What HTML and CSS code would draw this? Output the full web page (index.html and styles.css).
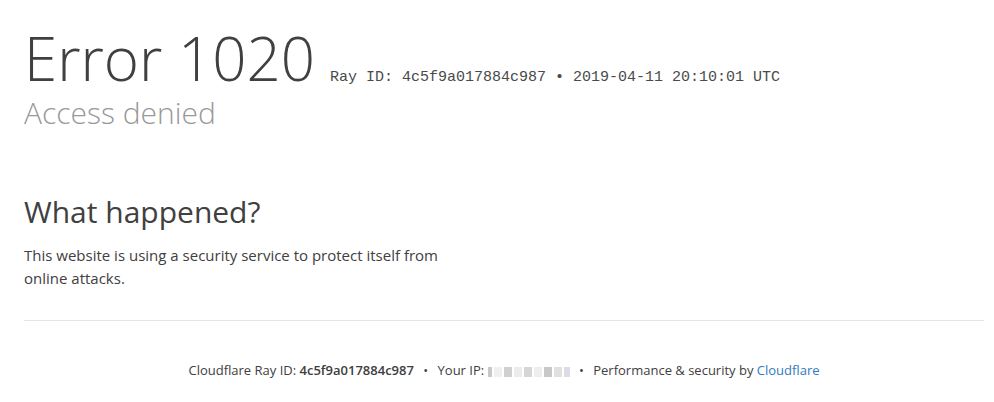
FILE: index.html
```html
<!DOCTYPE html>
<html>
<head>
<meta charset="utf-8">
<link rel="stylesheet" href="styles.css">
</head>
<body>
<div class="wrapper">
  <header class="header">
    <h1 class="title"><span class="code">Error 1020</span><small class="ray">Ray ID: 4c5f9a017884c987 &bull; 2019-04-11 20:10:01 UTC</small></h1>
    <h2 class="subtitle">Access denied</h2>
  </header>
  <section class="section">
    <h2 class="heading">What happened?</h2>
    <p class="text">This website is using a security service to protect itself from online attacks.</p>
  </section>
  <footer class="footer">
    <span>Cloudflare Ray ID: <strong>4c5f9a017884c987</strong></span>
    <span class="sep">&bull;</span>
    <span>Your IP: <span class="ip"><i class="px p1"></i><i class="px p2"></i><i class="px p3"></i><i class="px p4"></i><i class="px p5"></i><i class="px p6"></i><i class="px p7"></i><i class="px p8"></i><i class="px p9"></i></span></span>
    <span class="sep">&bull;</span>
    <span>Performance &amp; security by <a class="link" href="#">Cloudflare</a></span>
  </footer>
</div>
</body>
</html>
```
FILE: styles.css
```css
html, body { margin: 0; padding: 0; background: #fff; }
body { font-family: "Open Sans", "Liberation Sans", sans-serif; color: #404040; }
.wrapper { width: 960px; margin-left: 24px; padding-top: 28px; }
.title { margin: 0; font-weight: 300; font-size: 60px; line-height: 60px; color: #404040; display: flex; align-items: baseline; }
.ray { font-family: "Liberation Mono", monospace; font-size: 15px; line-height: 1; font-weight: 400; margin-left: 15px; color: #4a4a4a; }
.subtitle { margin: 7px 0 0; font-weight: 300; font-size: 30px; line-height: 36px; color: #999; }
.section { margin-top: 61px; padding-bottom: 30px; border-bottom: 1px solid #e5e5e5; }
.heading { margin: 0; font-weight: 400; font-size: 30px; line-height: 40px; color: #404040; }
.text { margin: 12px 0 0; width: 440px; font-size: 15px; line-height: 23px; }
.footer { text-align: center; font-size: 13px; padding-top: 40px; line-height: 18px; }
.footer strong { font-weight: 600; }
.sep { margin: 0 6px; }
.link { color: #2f7bbf; text-decoration: none; }
.ip { display: inline-flex; vertical-align: middle; height: 10px; gap: 2px; }
.px { display: block; width: 8px; height: 10px; background: #e8e8e8; }
.p1 { background: #c8c8c8; width: 4px; }
.p2 { background: #f0f0f0; }
.p3 { background: #d0d0d0; }
.p4 { background: #ececec; }
.p5 { background: #d6d6d6; }
.p6 { background: #eeeeee; }
.p7 { background: #c8c8c8; }
.p8 { background: #e0e0e0; }
.p9 { background: #dcdce8; width: 6px; }
```
